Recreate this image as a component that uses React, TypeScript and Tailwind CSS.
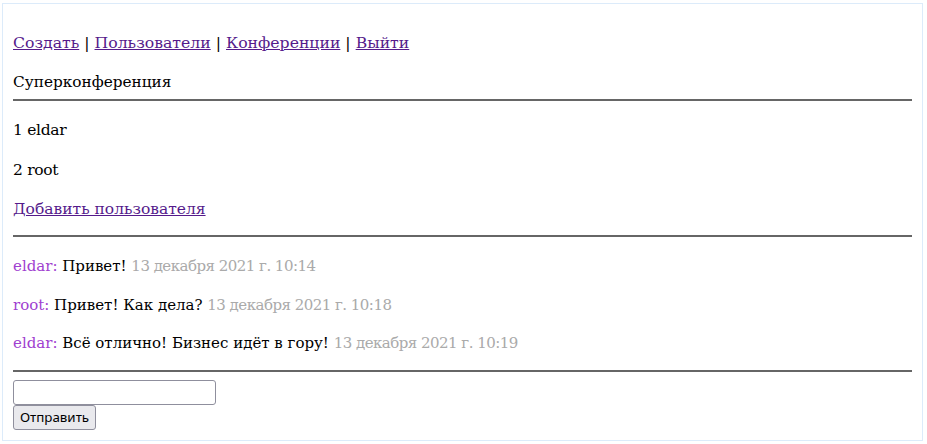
import React from "react";

const messages = [
  { user: "eldar", text: "Привет!", date: "13 декабря 2021 г. 10:14" },
  { user: "root", text: "Привет! Как дела?", date: "13 декабря 2021 г. 10:18" },
  { user: "eldar", text: "Всё отлично! Бизнес идёт в гору!", date: "13 декабря 2021 г. 10:19" },
];

export default function App() {
  return (
    <div className="h-[444px] w-[927px] bg-white pl-[2px] pt-[3px] font-['DejaVu_Serif',serif] text-[15.5px] text-black">
      <div className="h-[438px] w-[921px] border border-[#dcebfa] px-[10px] pt-[27px]">
        <nav className="text-[15.7px] leading-[24px]">
          <a href="#" className="text-[#551a8b] underline">Создать</a>
          <span> | </span>
          <a href="#" className="text-[#551a8b] underline">Пользователи</a>
          <span> | </span>
          <a href="#" className="text-[#551a8b] underline">Конференции</a>
          <span> | </span>
          <a href="#" className="text-[#551a8b] underline">Выйти</a>
        </nav>
        <p className="mt-[15px] text-[15.3px] leading-[24px]">Суперконференция</p>
        <hr className="mt-[5px] border-t-2 border-[#666]" />

        <div className="flex flex-col gap-[16px] pt-[17px] leading-[24px]">
          <p className="tracking-[-0.02em]">1 eldar</p>
          <p className="tracking-[-0.02em]">2 root</p>
          <p className="-mt-px">
            <a href="#" className="text-[#551a8b] underline">Добавить пользователя</a>
          </p>
        </div>
        <hr className="mt-[14px] border-t-2 border-[#666]" />

        <div className="flex flex-col gap-[14.5px] pt-[17px] text-[15px] leading-[24px]">
          {messages.map((m, i) => (
            <p key={i}>
              <span className="text-[#a040d0]">{m.user}:</span> {m.text}{" "}
              <span className="tracking-[-0.035em] text-[#aaa]">{m.date}</span>
            </p>
          ))}
        </div>
        <hr className="mt-[15px] border-t-2 border-[#666]" />

        <form className="flex flex-col items-start pt-[8px] font-['Noto_Sans',sans-serif] text-[13.33px]">
          <input
            type="text"
            className="h-[25px] w-[203px] rounded-[3px] border border-[#8f8f9d] bg-white px-1"
          />
          <button
            type="button"
            className="h-[25px] w-[83px] rounded-[3px] border border-[#8f8f9d] bg-[#e9e9ed] leading-none text-black"
          >
            Отправить
          </button>
        </form>
      </div>
    </div>
  );
}
